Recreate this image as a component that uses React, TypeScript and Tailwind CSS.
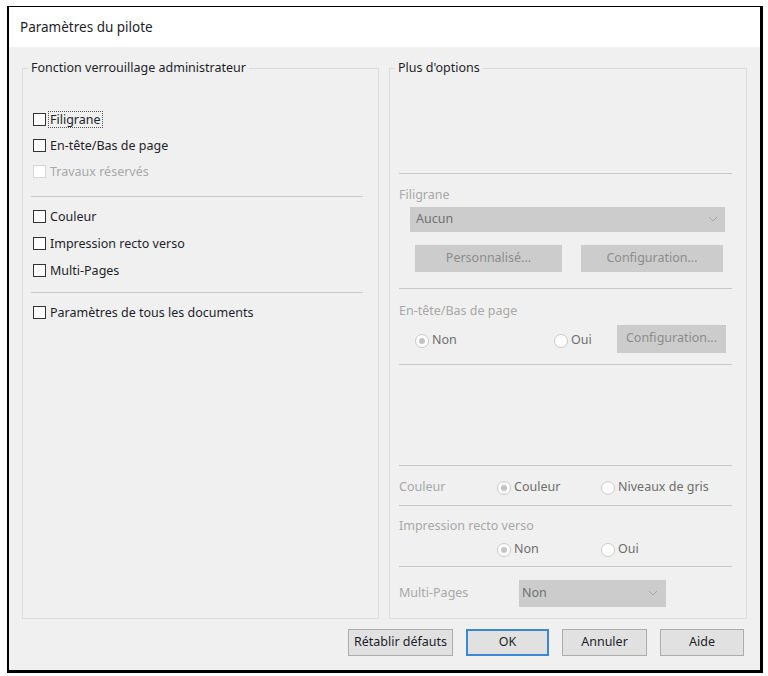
import React from 'react';

const FONT = { fontFamily: '"Noto Sans", "Liberation Sans", sans-serif' };

function CheckRow({ label, disabled, focus }: { label: string; disabled?: boolean; focus?: boolean }) {
  return (
    <div className="flex h-[26px] items-center pl-[10px]">
      <span
        className={`h-[13px] w-[13px] shrink-0 border bg-white ${disabled ? 'border-[#d6d6d6]' : 'border-[#333333]'}`}
      />
      <span
        className={`ml-[2px] px-[1px] leading-[15px] ${focus ? 'border border-dotted border-[#555]' : 'border border-transparent'} ${disabled ? 'text-[#a8a8a8]' : 'text-[#1e1e2a]'}`}
      >
        {label}
      </span>
    </div>
  );
}

function Radio({ label, checked }: { label: string; checked?: boolean }) {
  return (
    <div className="flex items-center">
      <span className="flex h-[14px] w-[14px] shrink-0 items-center justify-center rounded-full border border-[#c8c8c8] bg-white">
        {checked && <span className="h-[6px] w-[6px] rounded-full bg-[#c4c4c4]" />}
      </span>
      <span className="ml-[3px] text-[#6e6e6e]">{label}</span>
    </div>
  );
}

function Chevron() {
  return (
    <svg width="10" height="6" viewBox="0 0 10 6" className="shrink-0">
      <path d="M1 1 L5 5 L9 1" fill="none" stroke="#a6a6a6" strokeWidth="1" />
    </svg>
  );
}

function GreyButton({ label, className }: { label: string; className: string }) {
  return (
    <div className={`flex h-[27px] items-center justify-center bg-[#cccccc] text-[#8c8c8c] ${className}`}>
      {label}
    </div>
  );
}

const Sep = ({ className }: { className: string }) => <div className={`h-px bg-[#c8c8c8] ${className}`} />;

export default function App() {
  return (
    <div className="h-[676px] w-[768px] bg-white pl-[7px] pt-[6px] text-[12.5px]" style={FONT}>
      <div className="flex h-[667px] w-[756px] flex-col border-b-[3px] border-l-2 border-r-[3px] border-t border-black">
        {/* Title bar */}
        <div className="flex h-[40px] items-center bg-white pl-[11px] text-[13.5px] text-[#1e1e2a]">
          Paramètres du pilote
        </div>

        {/* Body */}
        <div className="flex flex-1 flex-col bg-[#f0f0f0] px-[13px] pt-[12px]">
          <div className="flex h-[560px] gap-[10px]">
            {/* Left group */}
            <fieldset className="w-[357px] border border-[#dcdcdc] pl-0">
              <legend className="ml-[5px] px-[3px] text-[#1e1e2a]">Fonction verrouillage administrateur</legend>
              <div className="pt-[29px]">
                <CheckRow label="Filigrane" focus />
                <CheckRow label="En-tête/Bas de page" />
                <CheckRow label="Travaux réservés" disabled />
                <Sep className="my-[11px] ml-[8px] mr-[15px]" />
                <div className="-mt-[5px]">
                  <div className="flex h-[27px] flex-col justify-center"><CheckRow label="Couleur" /></div>
                  <div className="flex h-[27px] flex-col justify-center"><CheckRow label="Impression recto verso" /></div>
                  <div className="flex h-[27px] flex-col justify-center"><CheckRow label="Multi-Pages" /></div>
                </div>
                <Sep className="mb-[7px] mt-[8px] ml-[8px] mr-[15px]" />
                <CheckRow label="Paramètres de tous les documents" />
              </div>
            </fieldset>

            {/* Right group */}
            <fieldset className="w-[358px] border border-[#dcdcdc]">
              <legend className="ml-[5px] px-[3px] text-[#1e1e2a]">Plus d'options</legend>
              <div className="flex flex-col pl-[9px] pr-[14px] pt-[95px] text-[#a8a8a8]">
                <Sep className="" />
                <div className="mt-[13px] leading-[15px]">Filigrane</div>
                <div className="ml-[11px] mr-[7px] mt-[5px] flex h-[25px] items-center justify-between bg-[#cccccc] pl-[6px] pr-[7px] text-[#707070]">
                  <span>Aucun</span>
                  <Chevron />
                </div>
                <div className="ml-[16px] mr-[9px] mt-[13px] flex justify-between">
                  <GreyButton label="Personnalisé..." className="w-[147px]" />
                  <GreyButton label="Configuration..." className="w-[142px]" />
                </div>
                <Sep className="mt-[16px]" />
                <div className="mt-[14px] leading-[15px]">En-tête/Bas de page</div>
                <div className="mt-[7px] flex h-[28px] items-center pl-[16px]">
                  <div className="w-[139px] pt-[4px]"><Radio label="Non" checked /></div>
                  <div className="w-[63px] pt-[4px]"><Radio label="Oui" /></div>
                  <GreyButton label="Configuration..." className="h-[28px] w-[109px]" />
                </div>
                <Sep className="mt-[11px]" />
                <div className="h-[100px]" />
                <Sep className="" />
                <div className="flex h-[39px] items-center pt-[5px]">
                  <div className="w-[98px]">Couleur</div>
                  <div className="w-[104px]"><Radio label="Couleur" checked /></div>
                  <Radio label="Niveaux de gris" />
                </div>
                <Sep className="" />
                <div className="mt-[12px] leading-[15px]">Impression recto verso</div>
                <div className="mt-[9px] flex h-[16px] items-center pl-[98px]">
                  <div className="w-[104px]"><Radio label="Non" checked /></div>
                  <Radio label="Oui" />
                </div>
                <Sep className="mt-[8px]" />
                <div className="mt-[13px] flex items-center">
                  <div className="w-[120px]">Multi-Pages</div>
                  <div className="flex h-[27px] w-[147px] items-center justify-between bg-[#cccccc] pl-[3px] pr-[8px] text-[#707070]">
                    <span>Non</span>
                    <Chevron />
                  </div>
                </div>
              </div>
            </fieldset>
          </div>

          {/* Buttons */}
          <div className="mt-[10px] flex justify-end gap-[13px] pr-[3px] text-[#1e1e2a]">
            <div className="flex h-[27px] w-[105px] items-center justify-center border border-[#adadad] bg-[#e1e1e1]">Rétablir défauts</div>
            <div className="flex h-[27px] w-[83px] items-center justify-center border-2 border-[#3a87d6] bg-[#e1e1e1]">OK</div>
            <div className="flex h-[27px] w-[85px] items-center justify-center border border-[#adadad] bg-[#e1e1e1]">Annuler</div>
            <div className="flex h-[27px] w-[84px] items-center justify-center border border-[#adadad] bg-[#e1e1e1]">Aide</div>
          </div>
        </div>
      </div>
    </div>
  );
}
